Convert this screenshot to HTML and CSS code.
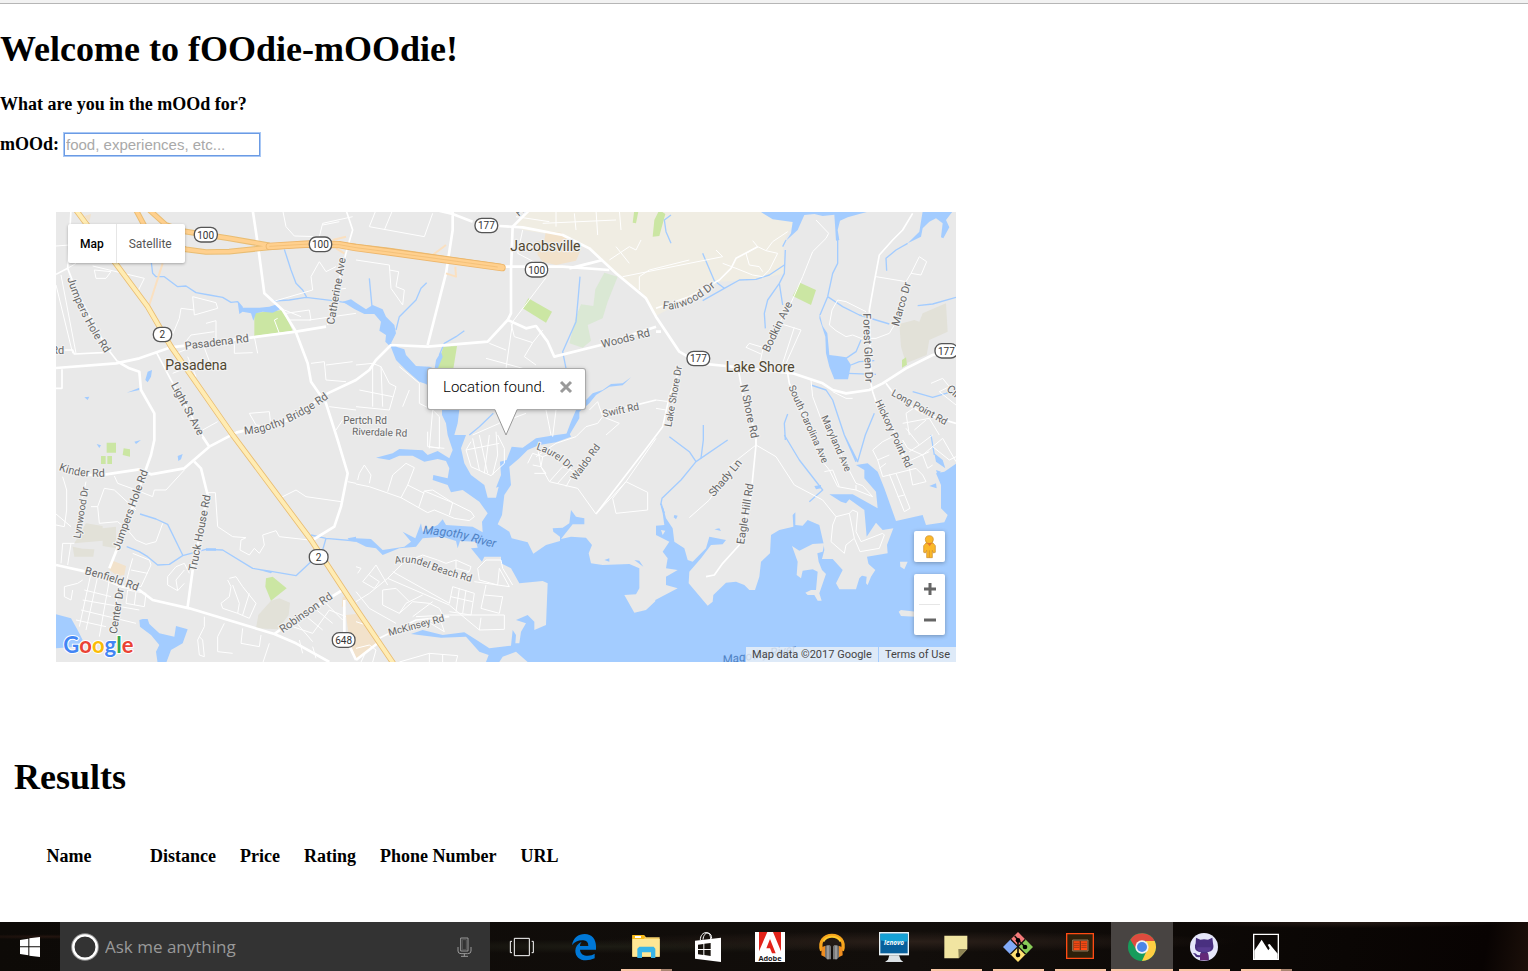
FILE: index.html
```html
<!DOCTYPE html>
<html lang="en">
<head>
<meta charset="utf-8">
<title>fOOdie-mOOdie</title>
<link rel="stylesheet" href="styles.css">
</head>
<body>
<div class="browser-edge"></div>
<main class="page">
  <h1 class="title">Welcome to fOOdie-mOOdie!</h1>
  <h3 class="question">What are you in the mOOd for?</h3>
  <form class="mood-form">
    <label class="mood-label" for="mood">mOOd:</label>
    <input class="mood-input" id="mood" type="text" placeholder="food, experiences, etc...">
  </form>

  <section class="map" aria-label="Map">
    <svg class="map-canvas" viewBox="0 6 2700 1350" preserveAspectRatio="xMidYMid slice">
      <rect class="land" width="2700" height="1360"/>

      <!-- Areas -->
      <g class="town">
        <path d="M1420,0H2125L2145,20L2215,38L2190,80L2182,110L2185,190L2120,205L2050,212L1990,215L1800,318L1760,250L1680,190L1600,120L1520,80L1400,60L1380,40Z"/>
      </g>
      <g class="peach">
        <path d="M1440,95L1465,90L1470,62L1515,68L1545,95L1575,118L1560,152L1500,165L1460,155L1445,135Z"/>
        <path d="M165,1050L210,1068L205,1095L185,1098L160,1080Z"/>
        <path d="M870,1215L900,1212L945,1260L960,1300L900,1350L880,1290Z"/>
        <path d="M85,18L105,12L100,35Z"/>
        <path d="M860,1160L870,1160V1190H857Z"/>
      </g>
      <g class="brown">
        <path d="M2530,342L2575,330L2590,335L2600,310L2670,280L2675,365L2620,390L2612,435L2550,460L2535,410Z"/>
        <path d="M90,940L140,948V955L180,950V1015L140,1008V992L55,1000Z"/>
        <path d="M50,1010L80,1016L115,1018L112,1040L55,1040Z"/>
        <path d="M645,1172L670,1165L702,1178L698,1215L665,1258L600,1255L607,1215Z"/>
      </g>
      <g class="woods">
        <path d="M1645,188L1685,200L1655,275L1640,325L1595,345L1605,392L1580,413L1540,400L1560,320L1575,283L1612,288L1618,238Z"/>
      </g>
      <g class="park">
        <path d="M595,308L650,304L680,300L710,362L595,378Z"/>
        <path d="M1162,410L1203,408L1192,476H1142Z"/>
        <path d="M1417,265L1488,305L1470,338L1400,295Z"/>
        <path d="M2232,218L2280,240L2265,285L2210,258Z"/>
        <path d="M1735,0H1748L1740,40L1730,38ZM1795,30L1810,0L1828,12L1810,78L1790,80Z"/>
        <path d="M2538,450L2550,442L2553,464L2538,473Z"/>
        <path d="M152,698h28v30h-28zM135,738h14v24h-14zM154,738h14v24h-14zM203,715L222,718V740L200,735Z"/>
        <path d="M630,1105L650,1100L692,1135L645,1172L628,1130Z"/>
      </g>

      <!-- Water -->
      <g class="water">
        <path d="M545,275L560,293H610L640,290L665,282L672,298L650,308L620,305L600,310L592,332L585,310L560,305L550,312Z"/>
        <path d="M860,275L885,268L900,278L930,298L950,285L980,298L990,320L1015,345L1020,370L1005,400L1025,412L1045,418L1050,435L1080,468L1120,470L1200,500L1210,598L1205,640L1195,675H1175L1170,640L1158,615V560L1110,522L1090,515L1050,480L1020,450L1005,412L988,395L990,375L970,362L975,335L955,312L925,312L895,297Z"/>
        <path d="M275,485L288,480L285,500L275,517L268,510ZM212,548L250,533V540ZM85,562L100,560L95,570Z"/>
        <path d="M1140,450L1155,425L1160,440L1145,476H1136Z"/>
        <path d="M1725,502L1700,520L1665,522L1640,540L1610,550L1585,575L1560,600L1545,635L1530,675H1540L1570,625L1570,605L1600,580L1620,555L1660,530L1700,526Z"/>
        <path d="M2115,6L2150,28L2210,36L2205,70L2190,92L2225,60L2245,15L2275,12L2300,18L2335,14L2338,60L2340,92L2350,90L2345,60L2352,32L2375,22L2410,12L2440,4Z"/>
        <path d="M2600,4H2690L2670,30L2680,52L2662,85L2655,82L2660,40L2640,25L2620,35L2600,55L2595,80L2555,100L2590,65Z"/>
        <path d="M2291,312L2300,348L2314,370L2320,435L2345,438L2370,442L2385,465L2376,508H2335L2320,470L2310,430L2308,380L2290,325Z"/>
        <path d="M0,1213L45,1225L62,1255L80,1290L60,1310L0,1315Z"/>
        <path d="M250,1230L260,1227L275,1227L280,1242L310,1270L355,1280L360,1248L395,1258L380,1300L345,1320L330,1360H305L300,1325L310,1305L285,1275L252,1250Z"/>
        <path d="M365,738L380,732L375,748L367,753ZM122,702L135,706L130,714ZM235,695L255,690L240,702ZM450,1015H480V1022H450ZM610,1080L650,1084L645,1090ZM875,985L900,980V995L880,992Z"/>
        <path transform="translate(900 675)" d="M275,0H330L315,40L325,85L345,120L385,150L395,188H420L428,155L420,158L435,120L432,80L452,75L467,35L500,38L540,10L600,0L640,-5L645,5L600,22L550,30L515,45L490,70L460,95L465,150L445,180L438,240L425,268L460,290L467,310L515,322L532,356L570,330L612,318L612,305L592,290L590,280L620,278L640,265L645,225L660,245L685,250V268L650,268L615,312L645,305L690,308L708,330L698,355L705,385L740,390L820,387L850,400V460L840,478L805,480L835,533L870,525L902,495V681H515L480,650L440,665L430,681H390L398,660L370,650L330,605L255,608L165,597L200,585L260,600L325,592L370,620L400,640L465,632L470,585L480,600L478,625L490,625L495,590L510,565L480,555L515,540L535,560V585L570,570L575,445L560,438L490,445L465,400L435,385V365H385L378,380L345,340L365,338L360,320L312,318L305,340L300,318L260,305L200,310L180,335L130,340L80,360L60,340L30,335L0,320V310L45,312L80,345L145,335L165,320L140,290L178,310L195,265L200,290L245,270L260,253L270,270L350,275L380,292L378,260L395,235L370,200L320,165L285,172L275,150L230,135L232,120L275,130L280,100L270,78L245,72L205,80L170,62L130,62L100,75L60,68L110,55L130,42L200,46L215,60L245,48L280,70L290,45Z"/>
        <path transform="translate(1800 675)" d="M-2,495L65,460L30,450V425L65,405L30,400L35,370L20,350L40,320L0,300V272L25,270L20,235L12,205L22,220L30,250L50,280L55,320L85,340L95,375L110,380L150,340L160,305L210,315L200,328L165,330L135,370L100,410L98,445L155,512L170,500L172,480L210,443L240,440L265,450L280,465H297L310,425L315,380L342,355L345,300L370,285L412,275L410,240L418,232V270L440,272L455,255L490,270L503,327L505,345L498,372H530L560,405L540,445L550,463H600L610,430L640,400L633,365L695,355L693,330L712,280L680,285L660,263L632,305L625,225L580,193L570,205L555,200L520,178H590L665,220L660,170L625,130V105L600,90L635,85L665,110L685,160L720,258L800,240L810,270L865,262L875,240L855,220V150L840,115L865,110L902,85V681H-2Z"/>
        <path d="M1645,1050L1660,1045L1660,1055ZM1735,1050L1750,1052L1762,1070ZM1975,958L1990,955L1995,963ZM1855,915L1865,917L1860,928L1853,922ZM2275,828L2295,825V835L2280,838ZM2620,828L2640,820L2642,835ZM2635,730L2660,750L2668,775L2640,755ZM2640,780L2655,785L2645,795Z"/>
      </g>
      <g class="land">
        <path d="M2208,1008L2230,1022L2270,1002L2305,1000L2300,1025L2284,1030L2288,1055L2298,1080L2310,1092L2290,1150L2297,1172L2285,1172L2275,1155L2255,1155L2248,1148L2265,1140L2280,1140L2285,1085L2270,1078L2240,1082L2235,1105L2222,1095L2225,1055Z"/>
        <path d="M2435,1060L2458,1080L2445,1100L2435,1125L2430,1120L2432,1100L2410,1095Z"/>
        <path d="M2532,1055L2555,1055L2545,1078L2533,1070ZM2528,1205L2535,1200L2580,1205V1220L2535,1218ZM1815,960L1828,962L1820,975Z"/>
      </g>
      <g class="stream">
        <path d="M285,150L290,190L300,200H325L365,230L390,228L420,248L460,255L500,262L525,277L545,275L560,293M685,118L705,180L720,220L740,240L752,262M650,273L700,270L750,262L830,272L870,278"/>
        <path d="M940,205L948,290M1112,218L1095,235L1080,270L1030,320L1020,360M1225,362L1200,380L1165,400L1150,435M1572,200L1566,270L1560,335L1520,425L1530,475M1312,610L1270,650L1240,675"/>
        <path d="M2345,90L2345,160L2330,190L2315,260L2292,315M2555,100L2520,120L2490,145L2492,182M2585,287L2630,282L2700,262M2315,260L2360,290L2410,315L2500,342M2188,120L2185,190L2170,220L2135,270L2125,310L2128,355M2185,165L2140,195L2100,208L2050,210L2005,235L1940,272M1940,130L1975,212L2005,235M2170,220L2180,285M2190,90L2180,110M2570,545L2630,562L2670,550L2700,540M2265,525L2310,540L2330,570L2365,675L2400,755M2195,612L2185,640L2188,690M2455,610L2428,675L2405,755L2365,675M1942,645V690L1935,745M2415,390L2400,425L2370,445M2385,465L2410,455L2455,452M2375,490L2460,493M1845,15L1825,30L1830,65L1845,100"/>
        <path d="M252,912L300,927L335,943L380,1035M212,1010L250,1025L275,1040L305,1065L340,1063L380,1037L450,1018L500,1020L590,1075L650,1085L720,1097L765,1055L800,1020L810,985L900,993M765,975L810,985"/>
        <path d="M2185,675L2230,750L2300,840L2260,875M1814,885L1818,865L1875,810L1920,755L2015,690M1840,680L1900,725L1920,755M2625,675L2635,735M1815,880L1825,910"/>
      </g>

      <!-- Minor streets -->
      <g class="street">
        <path d="M35,175L60,160M115,180L165,185L150,205L120,205ZM110,168L265,205L240,255M410,260L480,278L485,295L415,315ZM415,300L375,295L370,325L345,385M450,340L480,332V400M385,400L405,375L475,365M0,225L50,430M15,195L60,430M360,430L440,400L470,480M350,490L400,470M395,440L420,500M535,400V430L590,428M595,380L605,430M655,330L670,370M655,330L665,325M690,310L760,300L765,330L700,330M760,330L900,310M685,300L735,320M830,240L870,235"/>
        <path d="M650,275L770,240L765,200L790,155L810,185L840,170M680,0L690,50L715,78L790,80L800,40L890,20M800,45L850,35M0,108L40,105M765,460L805,455L810,510L870,515M810,465L890,455M580,610L640,605L645,650L600,645L580,610M440,660L485,635M820,590L900,600M840,660L860,630L900,625"/>
        <path d="M960,0L940,50L1105,80L1130,10M1010,0L985,60M900,150L1000,165L1005,235L1040,285L1045,240L1020,230L1028,185L1000,180M1470,203L1370,335L1350,475M1365,340L1375,380L1430,398L1460,360M1300,400L1350,420M1290,445L1400,475M1430,398L1405,440L1440,465M1400,60L1385,130L1480,180M1690,0L1695,60M1555,10L1560,60M1620,0L1625,75M1500,0V50M1460,40L1680,30M1680,110L1720,160M1660,150L1720,110L1740,120L1755,90M1750,240V200L1780,180L1900,150M1700,200L2000,140L1980,120M1380,20L1480,35"/>
        <path d="M2280,30L2318,70L2310,85L2270,125L2240,200L2200,290L2120,420L2110,468M2000,160L2040,175L2090,195L2120,200L2140,180L2165,130L2130,122L2105,110L2070,130L2080,165L2110,170L2120,185M2105,110L2090,92M2130,122L2150,95L2195,65M2170,340L2235,360L2190,460M2215,352L2180,460M2120,412L2080,400L2070,412L2115,432M2460,200L2550,215L2565,190L2590,140L2612,155L2595,195L2565,190M2550,215L2530,320L2500,370L2460,385L2415,385L2390,375L2370,380L2340,362L2320,345L2328,300L2345,270L2370,275L2430,305"/>
        <path d="M2265,510L2270,560L2300,640L2340,705M2390,565L2370,565L2330,545M2625,520L2660,505L2680,530L2650,545L2700,585M2560,675L2550,610L2580,590M2540,640L2620,625L2650,675M2575,660L2610,630M1800,570L1840,575M1800,595L1830,600"/>
        <path d="M900,465L950,460L975,470L1000,520L1020,530L1000,600L900,590M950,460V590M975,470L980,590M910,540L1010,560M1030,470L1090,520V580L1130,600L1120,715M1060,540L1040,590M1130,600L1150,620V715L1120,710M1250,675L1330,640L1410,610M1470,600L1485,675M1500,600L1490,680M1350,675L1355,620M1600,600L1625,575L1640,620L1625,640L1590,650L1560,680L1500,700L1440,740M1640,620L1690,640L1650,675"/>
        <path d="M20,800L32,840V900L25,950L0,945M0,912L45,950M175,798L185,820L240,840L290,860L295,840L330,840L385,780M90,815L70,900M145,835L125,890L130,940L185,935L215,960L240,990L270,1003L300,995L320,940M105,890H125M145,835L175,840L240,900M15,1060L20,1000L55,1000M35,1065L45,1000M455,848H478L485,950L530,980L570,983M570,983L555,990L552,1020L580,1035L595,1015L610,1030L625,1005L620,975L660,962L670,980L760,990M670,865L720,840L750,860L855,875M875,815L900,820M360,1070L335,1100L335,1125L365,1142L360,1110L385,1080M365,1142L385,1120M400,1090L385,1060L360,1070"/>
        <path d="M230,1045L220,1080L210,1120L255,1130L285,1065L280,1050L230,1030M225,1080L275,1090M80,1110L65,1120L25,1130L25,1160L45,1170L50,1140M105,1090L70,1250M125,1100L90,1260M160,1110L130,1280M190,1120L180,1180M85,1140L165,1160M80,1170L250,1200M75,1200L240,1240M60,1230L150,1250M215,1140L270,1150L265,1190L210,1180ZM240,1145L235,1185M520,1105L540,1100L560,1130L600,1180L580,1225L545,1210L500,1195L495,1180L520,1160L525,1130L515,1110M530,1125L550,1180L545,1210M580,1150L560,1215M445,1220V1250L425,1290L430,1335L445,1340L440,1290L430,1280M505,1240L485,1280V1325L530,1330M560,1255L555,1300L610,1310L615,1275M640,1300L620,1360M680,1240L770,1270L820,1200L870,1220M710,1225L770,1295M740,1210L800,1260M770,1190L830,1240M800,1170L860,1230M730,1290L740,1330M770,1310L780,1345"/>
        <path transform="translate(900 675)" d="M5,135L10,115L25,90L45,120L40,145M0,147L40,155L135,188L215,233L235,225L295,250L340,257L355,245L345,230L290,203L205,168L188,218M95,170L110,120L150,85L175,98L155,150L135,188M155,150L205,175M205,168L230,165L290,203L280,240M215,-10V35L265,40M345,20L330,45L345,95L405,122L445,85V40L425,0M350,10L370,105M370,0L395,115M400,0L385,115M330,45L430,25M420,-10L425,60L410,120M770,190L810,140L875,172L875,225L780,235L770,190M515,85L530,55L560,65L555,95L530,90M555,95L570,115L535,115M555,95L580,140L665,160L720,237L810,140L900,10M580,140L620,95L655,110L630,155M605,145L645,100M545,40L555,95M560,65L600,50"/>
        <path transform="translate(900 675)" d="M0,500L40,475L95,430L140,385L200,360L245,375L270,385L300,375L345,395L340,410L290,430M300,375V400L340,410M95,430L280,510L370,585L445,583V540L280,540L180,545M110,410L280,505L290,455L355,475L345,540L280,530M285,485L350,500M310,460L300,530M330,465L320,535M390,450L375,520L430,535L440,485L385,480M375,548L370,585M355,440L460,455L430,400L425,450L370,435L365,400L390,375L435,375L440,400L470,450M95,450L60,390L45,410L20,440L55,460L70,440L40,420M0,395L15,400L5,415M80,465L80,510L130,535L170,500L220,505L250,520L265,550M80,465L120,460L160,500M0,470L40,520L120,565M130,535L150,505L200,480M170,545L230,500M215,560L265,590L250,545L225,560M130,681L220,655L305,662L300,681M220,655V681M260,660V681M0,560L30,570M0,640L40,630L60,645L50,681M15,681L30,650"/>
        <path transform="translate(1800 675)" d="M300,30L230,85L160,195L100,248M300,30L360,65L415,150L500,195L540,245L530,270L525,320L565,355L570,330L595,310L580,235L590,225L605,232L600,290L615,320L680,295L685,300L670,340L612,350L595,310M540,245L580,235M465,0L500,80L520,105L545,155L600,165L650,185L620,152L600,145L545,40L520,0M505,110L530,105L550,155M600,165V150M650,45L680,20L720,0M650,45L665,75L680,125L720,115L780,100L800,120L810,140L790,145L770,150L760,100M690,85L670,100M665,75L700,60M700,118L745,230L762,220L720,115M725,185L745,180M740,15L755,40L800,60L815,100L830,90M760,50L790,30L750,-20M790,30L830,0M800,60L860,10L900,80M830,35L880,75L900,65M755,80L820,50M300,0V30"/>
      </g>
      <g class="road">
        <path d="M45,0L35,175L60,240L150,410L185,455M0,193L35,175M0,420H50L55,432L140,428L165,420M0,535H18V478M300,425L345,510L450,695"/>
        <path d="M870,0L890,60L875,110L815,345M1635,605L1700,595L1800,570M2570,10L2540,60L2510,90L2470,135L2455,215L2440,300L2445,520L2450,545L2465,590L2520,675L2550,760M1800,295L1900,260L1990,210L2025,175L2040,145L2105,110M2045,468L2060,550L2100,675V705M2195,490L2200,520L2270,675M2490,520L2520,560L2600,610L2700,640M1870,480L1840,560L1820,650L1760,730L1620,912M2100,705L2085,855L2050,1005L2000,1060L1975,1095L1950,1100M970,1285L1080,1230L1180,1220M1060,1040L1240,1115"/>
      </g>
      <g class="road-major">
        <path d="M590,0L605,100L625,250L680,300L718,362L755,460L765,515L810,580L845,690L875,790L855,890L835,950L770,990"/>
        <path d="M0,474L180,460L250,445L345,412L590,382L720,365L810,350"/>
        <path d="M185,455L220,475L250,485L255,540L295,610L295,690L285,735L200,975L160,1075"/>
        <path d="M540,668L700,630L815,550L900,510L940,480L960,450L1005,405L1115,410L1295,395L1355,330L1365,310V180L1370,50L1420,0M1355,330L1410,355L1440,348L1475,395L1495,440L1635,405L1800,350"/>
        <path d="M1190,0V60L1170,190L1115,405M1140,0L1190,12L1250,35M1340,170H1520L1660,180M1540,175L1600,160L1640,150"/>
        <path d="M1330,48L1400,52L1520,75L1600,115L1680,190L1770,265L1800,320L1870,425L1930,460L2010,468L2210,490L2300,520L2330,540L2370,550L2440,540L2480,520L2550,475L2630,435L2700,415"/>
        <path d="M10,770L90,795L150,793L250,778L285,793L385,775L460,710L540,668M415,755L435,775L455,855L410,1080L395,1190M440,680L460,710M0,1065L90,1085L200,1130L250,1140L290,1170L400,1195L655,1272L720,1300L820,1356M655,1272L720,1225L860,1140M865,1170V1275L900,1350M900,1350L962,1302M1800,365L1815,365"/>
      </g>

      <!-- Highways -->
      <g class="ramp"><path d="M320,160L275,300M1170,190L1200,200L1198,170M1130,135L1170,105M830,90L870,80M840,115L865,130"/></g>
      <g class="highway-edge"><path d="M60,0L275,290L345,410L530,675L765,990L900,1195L1012,1360"/><path d="M240,0L280,75L390,118L450,126L520,125L640,112L760,102L850,104L1000,122L1335,170M280,0L330,45L390,65L520,85L640,106"/></g>
      <path class="highway-yellow" d="M60,0L275,290L345,410L530,675L765,990L900,1195L1012,1360"/>
      <path class="highway-orange" d="M240,0L280,75L390,118L450,126L520,125L640,112L760,102L850,104L1000,122L1335,170M280,0L330,45L390,65L520,85L640,106"/>
      <path class="highway-wide-edge" d="M640,109L760,102L850,104L900,113L1000,126L1338,173"/>
      <path class="highway-wide" d="M640,109L760,102L850,104L900,113L1000,126L1338,173"/>
      <path class="highway-line" d="M640,109L760,102L850,104L900,113L1000,126L1325,171"/>

      <!-- Route shields -->
      <g class="shield">
        <rect x="415" y="52" width="69" height="44" rx="20"/><text x="449" y="86">100</text>
        <rect x="760" y="81" width="67" height="44" rx="20"/><text x="793" y="115">100</text>
        <rect x="1257" y="25" width="68" height="43" rx="20"/><text x="1291" y="58">177</text>
        <rect x="1408" y="157" width="67" height="44" rx="20"/><text x="1442" y="191">100</text>
        <rect x="292" y="352" width="55" height="43" rx="20"/><text x="319" y="385">2</text>
        <rect x="1893" y="424" width="68" height="43" rx="20"/><text x="1927" y="457">177</text>
        <rect x="2637" y="401" width="68" height="43" rx="20"/><text x="2671" y="434">177</text>
        <rect x="760" y="1019" width="56" height="44" rx="20"/><text x="788" y="1052">2</text>
        <rect x="829" y="1268" width="68" height="44" rx="20"/><text x="863" y="1302">648</text>
      </g>

      <!-- Labels -->
      <defs>
        <path id="p-jumpers" d="M34,205Q68,325 165,455"/>
        <path id="p-magothy-bridge" d="M566,673Q690,665 840,548"/>
        <path id="p-fairwood" d="M1820,296Q1890,310 1995,216"/>
        <path id="p-kinder" d="M8,780Q70,808 175,798"/>
        <path id="p-benfield" d="M85,1092Q160,1110 275,1155"/>
        <path id="p-river" d="M1100,972Q1200,978 1250,995T1360,1020"/>
        <path id="p-arundel" d="M1018,1062Q1060,1050 1110,1072T1290,1128"/>
        <path id="p-laurel" d="M1440,718Q1500,735 1565,805"/>
      </defs>
      <g class="label">
        <text><textPath href="#p-jumpers">Jumpers Hole Rd</textPath></text>
        <text><textPath href="#p-magothy-bridge">Magothy Bridge Rd</textPath></text>
        <text><textPath href="#p-fairwood">Fairwood Dr</textPath></text>
        <text><textPath href="#p-kinder">Kinder Rd</textPath></text>
        <text><textPath href="#p-benfield">Benfield Rd</textPath></text>
        <text transform="translate(388 419) rotate(-7)">Pasadena Rd</text>
        <text transform="translate(-14 431)">Rd</text>
        <text transform="translate(344 525) rotate(62)">Light St Ave</text>
        <text transform="translate(834 345) rotate(-80)">Catherine Ave</text>
        <text transform="translate(1639 414) rotate(-14)">Woods Rd</text>
        <text transform="translate(2138 428) rotate(-64)">Bodkin Ave</text>
        <text transform="translate(2421 310) rotate(88)">Forest Glen Dr</text>
        <text transform="translate(2528 350) rotate(-74)">Marco Dr</text>
        <text transform="translate(2052 526) rotate(78)">N Shore Rd</text>
        <text transform="translate(2670 540) rotate(40)">Circle Rd</text>
        <text transform="translate(190 1022) rotate(-70)">Jumpers Hole Rd</text>
        <text transform="translate(420 1085) rotate(-79)">Truck House Rd</text>
        <text transform="translate(680 1270) rotate(-35)">Robinson Rd</text>
        <text transform="translate(182 1273) rotate(-81)">Center Dr</text>
        <text transform="translate(1973 862) rotate(-50)">Shady Ln</text>
        <text transform="translate(2064 1004) rotate(-81)">Eagle Hill Rd</text>
      </g>
      <g class="label label-small">
        <text><textPath href="#p-arundel">Arundel Beach Rd</textPath></text>
        <text transform="translate(1000 1278) rotate(-15)">McKinsey Rd</text>
        <text transform="translate(2504 555) rotate(29)">Long Point Rd</text>
        <text transform="translate(2457 575) rotate(65)">Hickory Point Rd</text>
        <text transform="translate(862 643)">Pertch Rd</text>
        <text transform="translate(888 674) rotate(2)">Riverdale Rd</text>
        <text transform="translate(1642 622) rotate(-12)">Swift Rd</text>
        <text transform="translate(1846 652) rotate(-80)">Lake Shore Dr</text>
        <text transform="translate(2197 531) rotate(66)">South Carolina Ave</text>
        <text transform="translate(2295 622) rotate(66)">Maryland Ave</text>
        <text transform="translate(73 986) rotate(-81)">Lynwood Dr</text>
        <text transform="translate(1559 814) rotate(-54)">Waldo Rd</text>
        <text transform="translate(1388 20) rotate(-40)">Fa</text>
        <text><textPath href="#p-laurel">Laurel Dr</textPath></text>
      </g>
      <g class="river-label">
        <text><textPath href="#p-river">Magothy River</textPath></text>
        <text transform="translate(2002 1363) rotate(-9)">Magothy River</text>
      </g>
      <g class="city">
        <text x="328" y="480">Pasadena</text>
        <text x="1363" y="122">Jacobsville</text>
        <text x="2009" y="486">Lake Shore</text>
      </g>
      <text class="logo" x="22" y="1330"><tspan fill="#4285f4">G</tspan><tspan fill="#ea4335">o</tspan><tspan fill="#fbbc05">o</tspan><tspan fill="#4285f4">g</tspan><tspan fill="#34a853">l</tspan><tspan fill="#ea4335">e</tspan></text>
    </svg>

    <div class="map-types">
      <button class="map-type map-type-active" type="button">Map</button>
      <button class="map-type" type="button">Satellite</button>
    </div>

    <div class="info">
      <span>Location found.</span>
      <button class="info-close" type="button" aria-label="Close"><svg viewBox="0 0 14 14" width="14" height="14"><path d="M2 2L12 12M12 2L2 12" stroke="#9a9a9a" stroke-width="3"/></svg></button>
      <svg class="info-tail" viewBox="0 0 24 28" width="24" height="28"><path d="M1 0L12 26L23 0Z" fill="#fff"/><path d="M1 1L12 26L23 1" fill="none" stroke="#999"/></svg>
    </div>

    <div class="map-controls">
      <button class="control pegman" type="button" aria-label="Street View"><svg viewBox="0 0 45 72" width="15" height="24"><g fill="#fbb829" stroke="#c98a2a" stroke-width="2"><path d="M12 24H33L40 32V52L34 54L31 46V68H14V46L10 54L5 52V32Z"/><circle cx="22" cy="14" r="12"/></g><path d="M15 24H30L23 34Z" fill="#e5792b"/><path d="M22 46V68" stroke="#c98a2a" stroke-width="2"/></svg></button>
      <div class="control zoom">
        <button class="zoom-button" type="button" aria-label="Zoom in"><svg viewBox="0 0 12 12" width="12" height="12"><path d="M6 0V12M0 6H12" stroke="#666" stroke-width="3"/></svg></button>
        <button class="zoom-button" type="button" aria-label="Zoom out"><svg viewBox="0 0 12 12" width="12" height="12"><path d="M0 6H12" stroke="#666" stroke-width="3"/></svg></button>
      </div>
    </div>
    <div class="credits"><span class="credit">Map data ©2017 Google</span><a class="credit" href="#terms">Terms of Use</a></div>
  </section>

  <section class="results">
    <h1 class="results-title">Results</h1>
    <table class="results-table">
      <thead><tr><th class="name-column">Name</th><th>Distance</th><th>Price</th><th>Rating</th><th>Phone Number</th><th>URL</th></tr></thead>
    </table>
  </section>
</main>

<footer class="taskbar">
  <button class="start" type="button" aria-label="Start"><svg viewBox="0 0 60 60" width="20" height="20" fill="#fff"><path d="M0 9L25 5V28H0ZM28 4L60 0V28H28ZM0 31H25V55L0 51ZM28 31H60V60L28 56Z"/></svg></button>
  <div class="search">
    <svg viewBox="0 0 84 84" width="28" height="28"><circle cx="42" cy="42" r="37" fill="none" stroke="#999" stroke-width="9"/><circle cx="42" cy="42" r="35" fill="none" stroke="#fff" stroke-width="7"/></svg>
    <input class="search-input" type="text" aria-label="Search" placeholder="Ask me anything">
    <svg viewBox="0 0 45 60" width="15" height="20" fill="none" stroke="#999" stroke-width="3"><path d="M11 3H33V42H11ZM3 30V42Q3 50 12 50H32Q42 50 42 42V30M22 50V58M12 58H33"/><path d="M16 8H28V38H16Z" stroke="#666" stroke-width="2"/></svg>
  </div>
  <nav class="apps" aria-label="Taskbar">
    <button class="app" type="button" aria-label="Task View"><svg viewBox="0 0 90 90" fill="none" stroke="#fff" stroke-width="3"><path d="M22 19H67V71H22ZM15 28H10V62H15M74 28H79V62H74"/></svg></button>
    <button class="app" type="button" aria-label="Edge"><svg viewBox="0 0 90 90"><path d="M9 39C13 17 28 6 47 6C69 6 81 22 81 43V53H33C34 66 44 71 56 71C65 71 72 68 77 65V79C68 83 60 85 51 85C31 85 19 73 19 56C19 44 26 35 38 29C34 34 33 38 33 42H58C58 31 53 26 43 25C29 24 17 30 9 39Z" fill="#0078d7"/></svg></button>
    <button class="app app-open app-stacked" type="button" aria-label="File Explorer"><svg viewBox="0 0 90 90"><path d="M4 10H40L45 16H86V74H4Z" fill="#f5cf69"/><path d="M4 21H86V74H4Z" fill="#ffe795"/><path d="M4 9H38L43 16L38 21H4Z" fill="#f7b917"/><path d="M12 12H30V18H12Z" fill="#fff"/><path d="M19 78V50L25 44H68L73 50V78H60V61H33V78Z" fill="#39b5e8"/></svg></button>
    <button class="app" type="button" aria-label="Store"><svg viewBox="0 0 90 90"><path d="M6 26L84 17V90L6 80Z" fill="#fff"/><path d="M22 24C22 10 30 2 39 2C48 2 53 10 53 21M30 23C31 9 39 1 46 3C53 4 56 12 56 20" fill="none" stroke="#fff" stroke-width="3"/><path d="M15 38L31 36V51H15ZM34 35L53 33V51H34ZM15 54H31V69L15 67ZM34 54H53V72L34 69Z" fill="#17130e"/></svg></button>
    <button class="app" type="button" aria-label="Adobe"><svg viewBox="0 0 90 90"><path d="M0 0H90V90H0Z" fill="#fff"/><path d="M12 0H37L12 58ZM54 0H78V58ZM45 21L62 64H51L45 49H34Z" fill="#e2231a"/><text class="adobe-text" x="45" y="86">Adobe</text></svg></button>
    <button class="app" type="button" aria-label="Play Music"><svg viewBox="0 0 90 90"><path d="M14 56C5 28 22 10 45 10S85 28 76 56" fill="none" stroke="#f7a51d" stroke-width="10"/><path d="M19 28C31 10 59 10 71 28" fill="none" stroke="#fdc92c" stroke-width="6"/><path d="M14 46L25 41V76L13 70ZM76 46L65 41V76L77 70Z" fill="#ef8d20"/><path d="M25 43C31 37 41 38 42 44V82H30L24 75ZM65 43C59 37 49 38 48 44V82H60L66 75Z" fill="#777"/><path d="M33 42V82M57 42V82" stroke="#aaa" stroke-width="4"/></svg></button>
    <button class="app" type="button" aria-label="Lenovo"><svg viewBox="0 0 90 90"><path d="M0 0H90V70H0Z" fill="#e9f2f5"/><path d="M4 5H86V64H4Z" fill="#08609c"/><path d="M4 5H86V28Q45 38 4 25Z" fill="#16a1d5"/><path d="M31 70H60L65 83L73 90H18L27 83Z" fill="#dce2e5"/><text class="lenovo-text" x="45" y="40">lenovo</text></svg></button>
    <button class="app app-open" type="button" aria-label="Sticky Notes"><svg viewBox="0 0 90 90"><path d="M10 11H79V51L53 79H10Z" fill="#f1e5a1"/><path d="M52 51H79L53 79Z" fill="#8d8455"/></svg></button>
    <button class="app app-open" type="button" aria-label="Git"><svg viewBox="0 0 90 90"><path d="M45 0L68 23L45 46L22 23Z" fill="#f47a7a"/><path d="M23 22L46 45L23 68L0 45Z" fill="#82aaf7"/><path d="M67 22L90 45L67 68L44 45Z" fill="#88cb58"/><path d="M45 44L68 67L45 90L22 67Z" fill="#ffe071"/><path d="M23 22L68 67M67 22L22 67" stroke="#17130e" stroke-width="4"/><path d="M35 12L45 23V69M45 24L67 45" fill="none" stroke="#17130e" stroke-width="5"/><circle cx="45" cy="25" r="7"/><circle cx="45" cy="69" r="7"/><circle cx="66" cy="45" r="7"/></svg></button>
    <button class="app app-open" type="button" aria-label="Digital Editions"><svg viewBox="0 0 90 90"><path d="M5 5H85V79H5Z" fill="#2d210b" stroke="#ff4b13" stroke-width="4"/><path d="M23 24H69V57H23Z" fill="#7d3417" stroke="#8c785a" stroke-width="3"/><path d="M26 28H44V54H26ZM48 28H66V54H48Z" fill="#ff4b13"/><path d="M27 34H43M27 40H43M27 46H43M49 34H65M49 40H65M49 46H65" stroke="#7d3417" stroke-width="2"/></svg></button>
    <button class="app app-open app-active" type="button" aria-label="Chrome"><svg viewBox="0 0 90 90"><circle cx="45" cy="45" r="42" fill="#179c5b"/><path d="M10 23A42 42 0 0 1 83 27H45L28 53Z" fill="#dd4b3e"/><path d="M83 27A42 42 0 0 1 45 87L61 52L56 27Z" fill="#ffcd42"/><circle cx="45" cy="45" r="20" fill="#f1f1f1"/><circle cx="45" cy="45" r="15" fill="#4a86e8"/></svg></button>
    <button class="app app-open" type="button" aria-label="GitHub"><svg viewBox="0 0 90 90"><circle cx="45" cy="45" r="42" fill="#e6e7fa"/><path d="M21 17L34 23Q45 20 57 23L70 17L72 34Q77 53 65 58L55 61Q60 68 59 85H33V75Q20 78 17 68L12 63Q20 62 25 69L33 70L36 61Q19 58 18 47Q17 39 20 34Z" fill="#493080"/><path d="M25 46H66Q68 60 45 60T25 46Z" fill="#583b91"/><path d="M34 64H57L59 85H33Z" fill="#642878"/></svg></button>
    <button class="app app-open app-stacked" type="button" aria-label="Photos"><svg viewBox="0 0 90 90"><path d="M8 7H82V82H8Z" fill="none" stroke="#fff" stroke-width="4"/><path d="M10 56L32 23L52 55L56 49L50 38L56 36L80 65V82H10Z" fill="#fff"/></svg></button>
  </nav>
</footer>
</body>
</html>
```
FILE: styles.css
```css
* { box-sizing: border-box; }

body {
  margin: 0;
  min-height: 100vh;
  display: flex;
  flex-direction: column;
  background: #fff;
  color: #000;
  font-family: "Liberation Serif", "Times New Roman", serif;
  font-size: 18px;
}

button { border: 0; padding: 0; background: none; font: inherit; color: inherit; }

.browser-edge { height: 4px; background: #f2f2f2; border-bottom: 1px solid #b6b6b6; }
.page { flex: 1; }

.title, .results-title { margin: 0; font-size: 36px; line-height: 40px; }
.title { padding-top: 25px; }
.question { margin: 25px 0 18px; font-size: 18px; line-height: 20px; }
.mood-form { display: flex; align-items: center; gap: 4px; height: 25px; }
.mood-label { font-weight: bold; }
.mood-input {
  width: 198px;
  height: 25px;
  padding: 0 2px;
  border: 1px solid #a9c8f5;
  outline: 0;
  box-shadow: inset 0 0 0 1px #6b9be4;
  font: 15px "Liberation Sans", Arial, sans-serif;
}
.mood-input::placeholder { color: #a9a9a9; opacity: 1; }

.map {
  position: relative;
  width: min(900px, 100% - 56px);
  height: 450px;
  margin: 55px 0 0 56px;
  overflow: hidden;
  font-family: Roboto, sans-serif;
}
.map-canvas { display: block; width: 100%; height: 100%; }
.land { fill: #e9e9e9; }
.town { fill: #f0ede3; }
.peach { fill: #f2e2cb; }
.brown { fill: #e2e1d8; }
.woods { fill: #dae8d4; }
.park { fill: #cbe6a3; }
.water { fill: #a3ccff; }
.stream, .street, .road, .road-major, .ramp, .highway-edge, .highway-yellow, .highway-orange, .highway-wide, .highway-wide-edge, .highway-line {
  fill: none;
  stroke-linejoin: round;
}
.stream { stroke: #a3ccff; stroke-width: 4; }
.street { stroke: #fff; stroke-width: 3; }
.road { stroke: #fff; stroke-width: 5; }
.road-major { stroke: #fff; stroke-width: 8; }
.ramp { stroke: #fae0c0; stroke-width: 6; }
.highway-edge { stroke: #e9bd73; stroke-width: 17; }
.highway-yellow { stroke: #ffecb3; stroke-width: 12; }
.highway-orange { stroke: #ffd08e; stroke-width: 11; }
.highway-wide-edge { stroke: #edb66b; stroke-width: 22; stroke-linecap: round; }
.highway-wide { stroke: #ffd08e; stroke-width: 17; stroke-linecap: round; }
.highway-line { stroke: #efb96f; stroke-width: 2; }

.shield rect { fill: #fff; stroke: #555; stroke-width: 4; }
.shield text { fill: #333; font-size: 30px; text-anchor: middle; }
.label { fill: #666; font-size: 33px; }
.label text, .city text { stroke: #f1f1f1; stroke-width: 7; stroke-linejoin: round; paint-order: stroke; }
.label-small { font-size: 30px; }
.river-label { fill: #4f82c4; font-size: 36px; font-style: italic; }
.city { fill: #4f4630; font-size: 42px; }
.logo {
  font-family: Lato, sans-serif;
  font-size: 66px;
  font-weight: bold;
  stroke: #fff;
  stroke-width: 6;
  paint-order: stroke;
}

.map-types {
  position: absolute;
  left: 12px;
  top: 12px;
  display: flex;
  background: #fff;
  border-radius: 2px;
  box-shadow: 0 1px 3px rgba(0, 0, 0, .3);
}
.map-type { height: 39px; padding: 0 12px; font-size: 12px; color: #565656; }
.map-type + .map-type { padding: 0 13px 0 12px; border-left: 1px solid #e6e6e6; }
.map-type-active { color: #000; font-weight: 500; }

.info {
  position: absolute;
  left: 372px;
  top: 157px;
  display: flex;
  align-items: center;
  justify-content: space-between;
  width: 157px;
  height: 40px;
  padding: 0 12px 5px 15px;
  background: #fff;
  border-radius: 2px;
  box-shadow: 0 0 0 1px #aaa, 0 1px 5px rgba(0, 0, 0, .4);
  font-size: 15px;
  font-weight: 300;
}
.info-close { display: flex; }
.info-tail { position: absolute; left: 66px; top: 40px; }

.map-controls { position: absolute; right: 11px; bottom: 27px; display: grid; gap: 12px; }
.control { width: 31px; background: #fff; border-radius: 2px; box-shadow: 0 1px 4px rgba(0, 0, 0, .3); }
.pegman { display: grid; place-items: center; height: 31px; }
.zoom { display: grid; justify-items: center; }
.zoom-button { display: grid; place-items: center; width: 21px; height: 30px; }
.zoom-button + .zoom-button { height: 31px; border-top: 1px solid #e6e6e6; }

.credits {
  position: absolute;
  right: 0;
  bottom: 0;
  display: flex;
  gap: 1px;
  font-size: 11px;
  line-height: 14px;
}
.credit { padding: 1px 6px 0; background: rgba(245, 245, 245, .72); color: #444; text-decoration: none; }

.results { padding-top: 95px; }
.results-title { padding-left: 14px; }
.results-table { margin-top: 49px; border-collapse: collapse; }
.results-table th { padding: 0 12px; line-height: 20px; white-space: nowrap; }
.results-table .name-column { width: 138px; }

.taskbar {
  display: flex;
  height: 49px;
  background:
    radial-gradient(ellipse at 88% 0, #251a15 0, transparent 9%),
    radial-gradient(ellipse at 60% 40%, #2a1f19 0, transparent 25%),
    radial-gradient(ellipse at 40% 50%, #1d1c14 0, transparent 20%),
    radial-gradient(ellipse at 3% 30%, #24150f 0, transparent 5%),
    linear-gradient(100deg, #0d0a07, #120e0b 60%, #0a0604 88%, #080302 97%, #1c100a);
}
.start { width: 60px; display: grid; place-items: center; }
.search {
  display: flex;
  align-items: center;
  gap: 6px;
  width: 430px;
  padding: 0 18px 0 11px;
  background: #333;
}
.search-input {
  flex: 1;
  min-width: 0;
  padding: 0;
  border: 0;
  background: none;
  font: 17px "Open Sans", "Noto Sans", sans-serif;
}
.search-input::placeholder { color: #999; opacity: 1; }
.apps { display: flex; padding-left: 1px; }
.app { position: relative; width: 62px; display: grid; place-items: center; }
.app svg { width: 30px; height: 30px; }
.app-open::after {
  content: "";
  position: absolute;
  left: 6px;
  right: 5px;
  bottom: 0;
  height: 2px;
  background: #f8c5a3;
}
.app-stacked::after { background: linear-gradient(90deg, #f8c5a3 40px, #a98570 40px); }
.app-active { background: #484442; }
.app-active::after { left: 0; right: 0; }
.adobe-text { font: bold 22px "Open Sans", sans-serif; text-anchor: middle; fill: #222; }
.lenovo-text { font: italic bold 19px "Open Sans", sans-serif; text-anchor: middle; fill: #fff; }
```
